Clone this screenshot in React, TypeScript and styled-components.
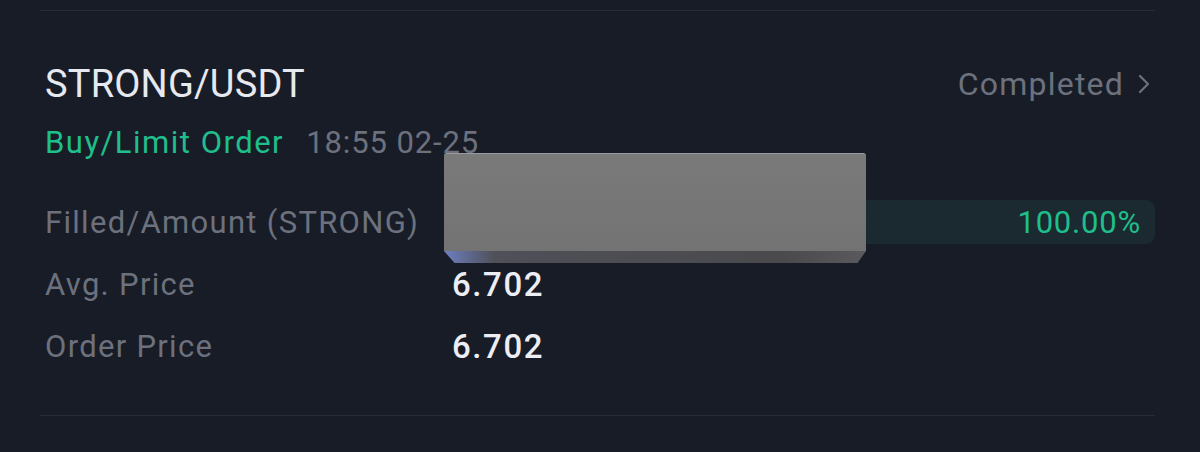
import React from 'react';
import styled, { createGlobalStyle } from 'styled-components';

const GlobalStyle = createGlobalStyle`
  html, body {
    margin: 0;
    padding: 0;
    background: #181c27;
  }
  body {
    font-family: Roboto, "Liberation Sans", sans-serif;
  }
`;

const Page = styled.div`
  width: 1200px;
  height: 452px;
  background: #181c27;
  padding-top: 10px;
  box-sizing: border-box;
`;

const Divider = styled.div`
  height: 1px;
  margin: 0 45px 0 40px;
  background: #272c38;
`;

const Card = styled.div`
  position: relative;
  padding: 51px 45px 47px 45px;
`;

const Header = styled.div`
  display: flex;
  align-items: center;
  justify-content: space-between;
  height: 44px;
`;

const Pair = styled.div`
  font-size: 38px;
  color: #e7e9f0;
  letter-spacing: 0.2px;
`;

const Status = styled.div`
  display: flex;
  align-items: center;
  gap: 13px;
  font-size: 32px;
  letter-spacing: 1.2px;
  color: #6c717d;
  padding-right: 4px;
`;

const SubLine = styled.div`
  display: flex;
  align-items: center;
  gap: 22px;
  height: 36px;
  margin-top: 18px;
`;

const Side = styled.span`
  font-size: 31px;
  letter-spacing: 1.5px;
  color: #1fbf8c;
`;

const Time = styled.span`
  font-size: 31px;
  letter-spacing: 0.9px;
  color: #6c717d;
`;

const Rows = styled.div`
  display: grid;
  grid-template-columns: 400px 1fr;
  grid-auto-rows: 44px;
  row-gap: 18px;
  margin-top: 40px;
`;

const Label = styled.div`
  display: flex;
  align-items: center;
  font-size: 31px;
  letter-spacing: 1.3px;
  color: #6c717d;
`;

const Value = styled.div`
  display: flex;
  align-items: center;
  padding-left: 7px;
  font-size: 33px;
  font-weight: 500;
  letter-spacing: 1.6px;
  color: #eceef4;
`;

const Bar = styled.div`
  display: flex;
  align-items: center;
  justify-content: flex-end;
  padding-right: 14px;
  border-radius: 9px;
  background: #1b2a30;
  font-size: 31px;
  letter-spacing: 0.8px;
  color: #1fbf8c;
`;

const Redaction = styled.div`
  position: absolute;
  left: 444px;
  top: 142px;
  width: 422px;
  height: 110px;
`;

const RedactFace = styled.div`
  height: 97px;
  border-radius: 3px 3px 0 0;
  background: linear-gradient(180deg, #7a7a7a 0%, #737373 100%);
  border-top: 1px solid #9a9aa2;
`;

const RedactEdge = styled.div`
  height: 12px;
  clip-path: polygon(0 0, 100% 0, 98% 100%, 2.5% 100%);
  background: linear-gradient(90deg, #6d7fc0 0%, #4f5058 12%, #4a4a4d 80%, #5a5a5e 100%);
`;

const Chevron = () => (
  <svg width="14" height="24" viewBox="0 0 14 24" fill="none">
    <path d="M3 4l8 8-8 8" stroke="#6c717d" strokeWidth="2.2" strokeLinecap="round" strokeLinejoin="round" />
  </svg>
);

const rows = [
  { label: 'Filled/Amount (STRONG)', value: '100.00%', bar: true },
  { label: 'Avg. Price', value: '6.702' },
  { label: 'Order Price', value: '6.702' },
];

export default function App() {
  return (
    <Page>
      <GlobalStyle />
      <Divider />
      <Card>
        <Header>
          <Pair>STRONG/USDT</Pair>
          <Status>
            Completed
            <Chevron />
          </Status>
        </Header>
        <SubLine>
          <Side>Buy/Limit Order</Side>
          <Time>18:55 02-25</Time>
        </SubLine>
        <Rows>
          {rows.map((r) => (
            <React.Fragment key={r.label}>
              <Label>{r.label}</Label>
              {r.bar ? <Bar>{r.value}</Bar> : <Value>{r.value}</Value>}
            </React.Fragment>
          ))}
        </Rows>
        <Redaction>
          <RedactFace />
          <RedactEdge />
        </Redaction>
      </Card>
      <Divider />
    </Page>
  );
}
